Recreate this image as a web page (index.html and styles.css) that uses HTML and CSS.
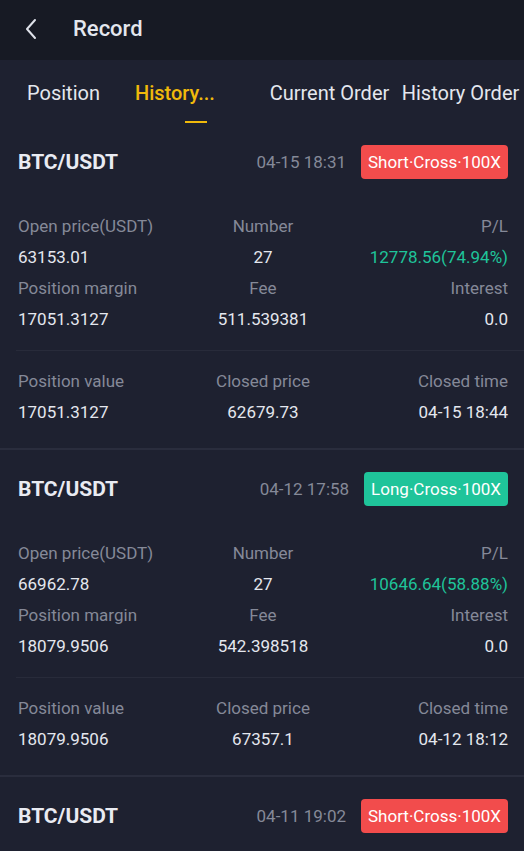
FILE: index.html
```html
<!DOCTYPE html>
<html lang="en">
<head>
<meta charset="UTF-8" />
<meta name="viewport" content="width=device-width, initial-scale=1" />
<title>Record</title>
<link rel="stylesheet" href="styles.css">
</head>
<body>

<header class="topbar">
  <span class="back" title="Back">
    <svg width="14" height="22" viewBox="0 0 14 22"><path d="M11 2 L3 11 L11 20" fill="none" stroke="#dfe2ea" stroke-width="2" stroke-linecap="round" stroke-linejoin="round"/></svg>
  </span>
  <span class="title">Record</span>
</header>

<nav class="tabs">
  <a class="tab">Position</a>
  <a class="tab active">History...</a>
  <a class="tab">Current Order</a>
  <a class="tab">History Order</a>
</nav>

<main>
  <!-- Record 1 -->
  <section class="card">
    <div class="card-head">
      <span class="pair">BTC/USDT</span>
      <span class="date">04-15 18:31</span>
      <span class="badge short">Short·Cross·100X</span>
    </div>
    <div class="grid">
      <span class="label">Open price(USDT)</span><span class="label">Number</span><span class="label">P/L</span>
      <span class="value">63153.01</span><span class="value">27</span><span class="value up">12778.56(74.94%)</span>
      <span class="label">Position margin</span><span class="label">Fee</span><span class="label">Interest</span>
      <span class="value">17051.3127</span><span class="value">511.539381</span><span class="value">0.0</span>
    </div>
    <hr class="divider">
    <div class="grid">
      <span class="label">Position value</span><span class="label">Closed price</span><span class="label">Closed time</span>
      <span class="value">17051.3127</span><span class="value">62679.73</span><span class="value">04-15 18:44</span>
    </div>
  </section>

  <!-- Record 2 -->
  <section class="card">
    <div class="card-head">
      <span class="pair">BTC/USDT</span>
      <span class="date">04-12 17:58</span>
      <span class="badge long">Long·Cross·100X</span>
    </div>
    <div class="grid">
      <span class="label">Open price(USDT)</span><span class="label">Number</span><span class="label">P/L</span>
      <span class="value">66962.78</span><span class="value">27</span><span class="value up">10646.64(58.88%)</span>
      <span class="label">Position margin</span><span class="label">Fee</span><span class="label">Interest</span>
      <span class="value">18079.9506</span><span class="value">542.398518</span><span class="value">0.0</span>
    </div>
    <hr class="divider">
    <div class="grid">
      <span class="label">Position value</span><span class="label">Closed price</span><span class="label">Closed time</span>
      <span class="value">18079.9506</span><span class="value">67357.1</span><span class="value">04-12 18:12</span>
    </div>
  </section>

  <!-- Record 3 -->
  <section class="card">
    <div class="card-head">
      <span class="pair">BTC/USDT</span>
      <span class="date">04-11 19:02</span>
      <span class="badge short">Short·Cross·100X</span>
    </div>
  </section>
</main>

</body>
</html>
```

FILE: styles.css
```css
/* Genel */
body, html {
  margin: 0;
  padding: 0;
  height: 100%;
  background-color: #1e2130;
  font-family: Roboto, "Noto Sans", sans-serif;
  overflow: hidden;
}

/* Üst bar */
.topbar {
  height: 60px;
  background: #171a24;
  display: flex;
  align-items: center;
  padding-left: 24px;
  padding-bottom: 3px;
  box-sizing: border-box;
}
.back {
  display: flex;
  width: 14px;
  margin-right: 35px;
}
.title {
  color: #e4e7ee;
  font-size: 22px;
  font-weight: 500;
}

/* Sekmeler */
.tabs {
  height: 63px;
  display: grid;
  grid-template-columns: 127px 135px 135px 1fr;
}
.tab {
  display: flex;
  align-items: center;
  justify-content: center;
  position: relative;
  color: #e4e7ee;
  font-size: 20px;
  white-space: nowrap;
  padding-top: 2px;
}
.tab.active {
  color: #f0b90b;
  font-weight: 500;
  justify-content: flex-start;
  padding-left: 8px;
}
.tab.active::after {
  content: "";
  position: absolute;
  left: 58px;
  bottom: 0;
  width: 22px;
  height: 2px;
  background: #f0b90b;
}

/* Kayıt kartları */
.card {
  padding: 22px 16px 20px 18px;
  border-bottom: 2px solid #2a2d3d;
}
.card-head {
  display: flex;
  align-items: center;
  height: 34px;
  margin-bottom: 32px;
}
.pair {
  color: #e9ebf2;
  font-size: 21px;
  font-weight: 700;
  flex: 1;
}
.date {
  color: #858998;
  font-size: 17px;
  margin-right: 15px;
}
.badge {
  height: 34px;
  line-height: 34px;
  padding: 0 7px;
  border-radius: 4px;
  color: #fff;
  font-size: 17px;
}
.badge.short { background: #f24c4c; }
.badge.long { background: #1fc49a; }

.grid {
  display: grid;
  grid-template-columns: 1fr auto 1fr;
  line-height: 31px;
  font-size: 17px;
}
.grid span:nth-child(3n+2) { text-align: center; }
.grid span:nth-child(3n) { text-align: right; }
.label { color: #858998; }
.value { color: #e4e7ee; }
.value.up { color: #1fc49a; }

.divider {
  border: 0;
  border-top: 1px solid #282b3a;
  margin: 15px -16px 15px -2px;
}
```
